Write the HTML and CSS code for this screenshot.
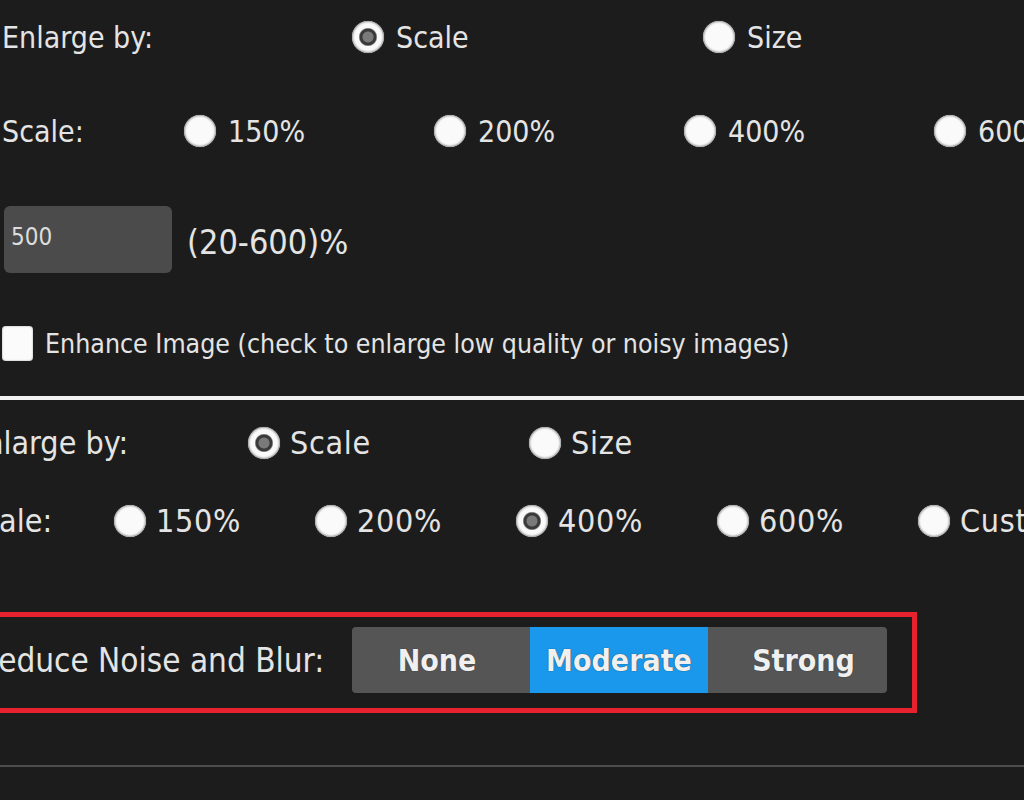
FILE: index.html
```html
<!DOCTYPE html>
<html>
<head>
<meta charset="utf-8">
<link rel="stylesheet" href="styles.css">
</head>
<body>
<div class="page">
  <section class="panel panel-top">
    <div class="row row-enlarge">
      <span class="label">Enlarge by:</span>
      <label class="opt opt-wide"><span class="radio checked"></span><span class="txt">Scale</span></label>
      <label class="opt"><span class="radio"></span><span class="txt">Size</span></label>
    </div>
    <div class="row row-scale">
      <span class="label">Scale:</span>
      <label class="opt"><span class="radio"></span><span class="txt">150%</span></label>
      <label class="opt"><span class="radio"></span><span class="txt">200%</span></label>
      <label class="opt"><span class="radio"></span><span class="txt">400%</span></label>
      <label class="opt"><span class="radio"></span><span class="txt">600%</span></label>
    </div>
    <div class="row row-custom">
      <div class="input">500</div>
      <span class="range">(20-600)%</span>
    </div>
    <div class="row row-check">
      <span class="checkbox"></span>
      <span class="check-txt">Enhance Image (check to enlarge low quality or noisy images)</span>
    </div>
  </section>
  <div class="divider"></div>
  <section class="panel panel-bottom">
    <div class="row row-enlarge">
      <span class="label">Enlarge by:</span>
      <label class="opt opt-wide"><span class="radio checked"></span><span class="txt">Scale</span></label>
      <label class="opt"><span class="radio"></span><span class="txt">Size</span></label>
    </div>
    <div class="row row-scale">
      <span class="label">Scale:</span>
      <label class="opt"><span class="radio"></span><span class="txt">150%</span></label>
      <label class="opt"><span class="radio"></span><span class="txt">200%</span></label>
      <label class="opt"><span class="radio checked"></span><span class="txt">400%</span></label>
      <label class="opt"><span class="radio"></span><span class="txt">600%</span></label>
      <label class="opt"><span class="radio"></span><span class="txt">Custom</span></label>
    </div>
    <div class="highlight">
      <span class="noise-label">Reduce Noise and Blur:</span>
      <div class="segmented">
        <span class="seg">None</span>
        <span class="seg active">Moderate</span>
        <span class="seg">Strong</span>
      </div>
    </div>
    <div class="rule"></div>
  </section>
</div>
</body>
</html>
```
FILE: styles.css
```css
html, body {
  margin: 0;
  padding: 0;
  background: #1c1c1c;
}
body {
  width: 1024px;
  height: 800px;
  overflow: hidden;
  font-family: "DejaVu Sans Condensed", "DejaVu Sans", sans-serif;
  font-stretch: condensed;
  color: #e4e4e4;
}
.page {
  display: flex;
  flex-direction: column;
}
.panel {
  display: flex;
  flex-direction: column;
}
.panel-top {
  height: 396px;
  font-size: 30px;
  padding-left: 2px;
}
.row {
  display: flex;
  align-items: center;
  white-space: nowrap;
}
.label {
  flex: 0 0 auto;
}
.opt {
  display: flex;
  align-items: center;
  flex: 0 0 auto;
}
.radio {
  width: 32px;
  height: 32px;
  border-radius: 50%;
  background: #fafafa;
  box-shadow: inset 0 0 2px 1px #9a9a9a, 0 0 1px #777;
  flex: 0 0 auto;
}
.radio.checked {
  background: radial-gradient(circle, #7a7a7a 0 5px, #3a3a3a 6px 8px, #fafafa 9.5px);
}

/* top panel */
.panel-top .row-enlarge { height: 74px; }
.panel-top .row-enlarge .label { width: 350px; }
.panel-top .row-enlarge .opt-wide { width: 351px; }
.panel-top .opt .txt { margin-left: 12px; }
.panel-top .row-scale { height: 74px; margin-top: 20px; }
.panel-top .row-scale .label { width: 182px; }
.panel-top .row-scale .opt { width: 250px; }
.row-custom {
  margin-top: 38px;
  height: 67px;
}
.input {
  width: 168px;
  height: 67px;
  margin-left: 2px;
  box-sizing: border-box;
  background: #4b4b4b;
  border-radius: 6px;
  font-size: 24px;
  padding: 17px 0 0 7px;
  color: #dcdcdc;
}
.range {
  margin-left: 15px;
  font-size: 34px;
  padding-top: 4px;
}
.row-check {
  margin-top: 52px;
  height: 36px;
}
.checkbox {
  width: 31px;
  height: 35px;
  border-radius: 4px;
  background: #fbfbfb;
  box-shadow: inset 0 0 2px #999;
}
.check-txt {
  font-size: 26.5px;
  margin-left: 12px;
}
.divider {
  height: 4px;
  background: #f2f2f2;
}

/* bottom panel */
.panel-bottom {
  font-size: 32px;
  overflow: hidden;
  height: 400px;
}
.panel-bottom .row-enlarge { height: 60px; margin-top: 13px; }
.panel-bottom .row-enlarge .label { width: 281px; margin-left: -33px; }
.panel-bottom .row-enlarge .opt-wide { width: 281px; }
.panel-bottom .opt .txt { margin-left: 10px; letter-spacing: 0.7px; }
.panel-bottom .row-scale { height: 60px; margin-top: 18px; }
.panel-bottom .row-scale .label { width: 149px; margin-left: -35px; }
.panel-bottom .row-scale .opt { width: 201px; }
.highlight {
  display: flex;
  align-items: center;
  align-self: flex-start;
  margin-top: 61px;
  margin-left: -10px;
  border: 5px solid #e8212f;
  padding: 10px 25px 15px 0;
}
.noise-label {
  flex: 0 0 373px;
  margin-left: -16px;
  font-size: 33px;
  white-space: nowrap;
}
.segmented {
  display: flex;
  height: 66px;
  border-radius: 4px;
  overflow: hidden;
  background: #555555;
}
.seg {
  width: 178px;
  display: flex;
  align-items: center;
  justify-content: center;
  font-weight: bold;
  font-size: 30px;
  color: #f0f0f0;
  text-shadow: 0 0 1px #222;
}
.seg:first-child { padding-right: 8px; box-sizing: border-box; }
.seg:last-child { width: 179px; padding-left: 12px; box-sizing: border-box; }
.seg.active {
  background: #1a98ec;
}
.rule {
  margin-top: 52px;
  height: 2px;
  background: #4d4d4d;
}
```
